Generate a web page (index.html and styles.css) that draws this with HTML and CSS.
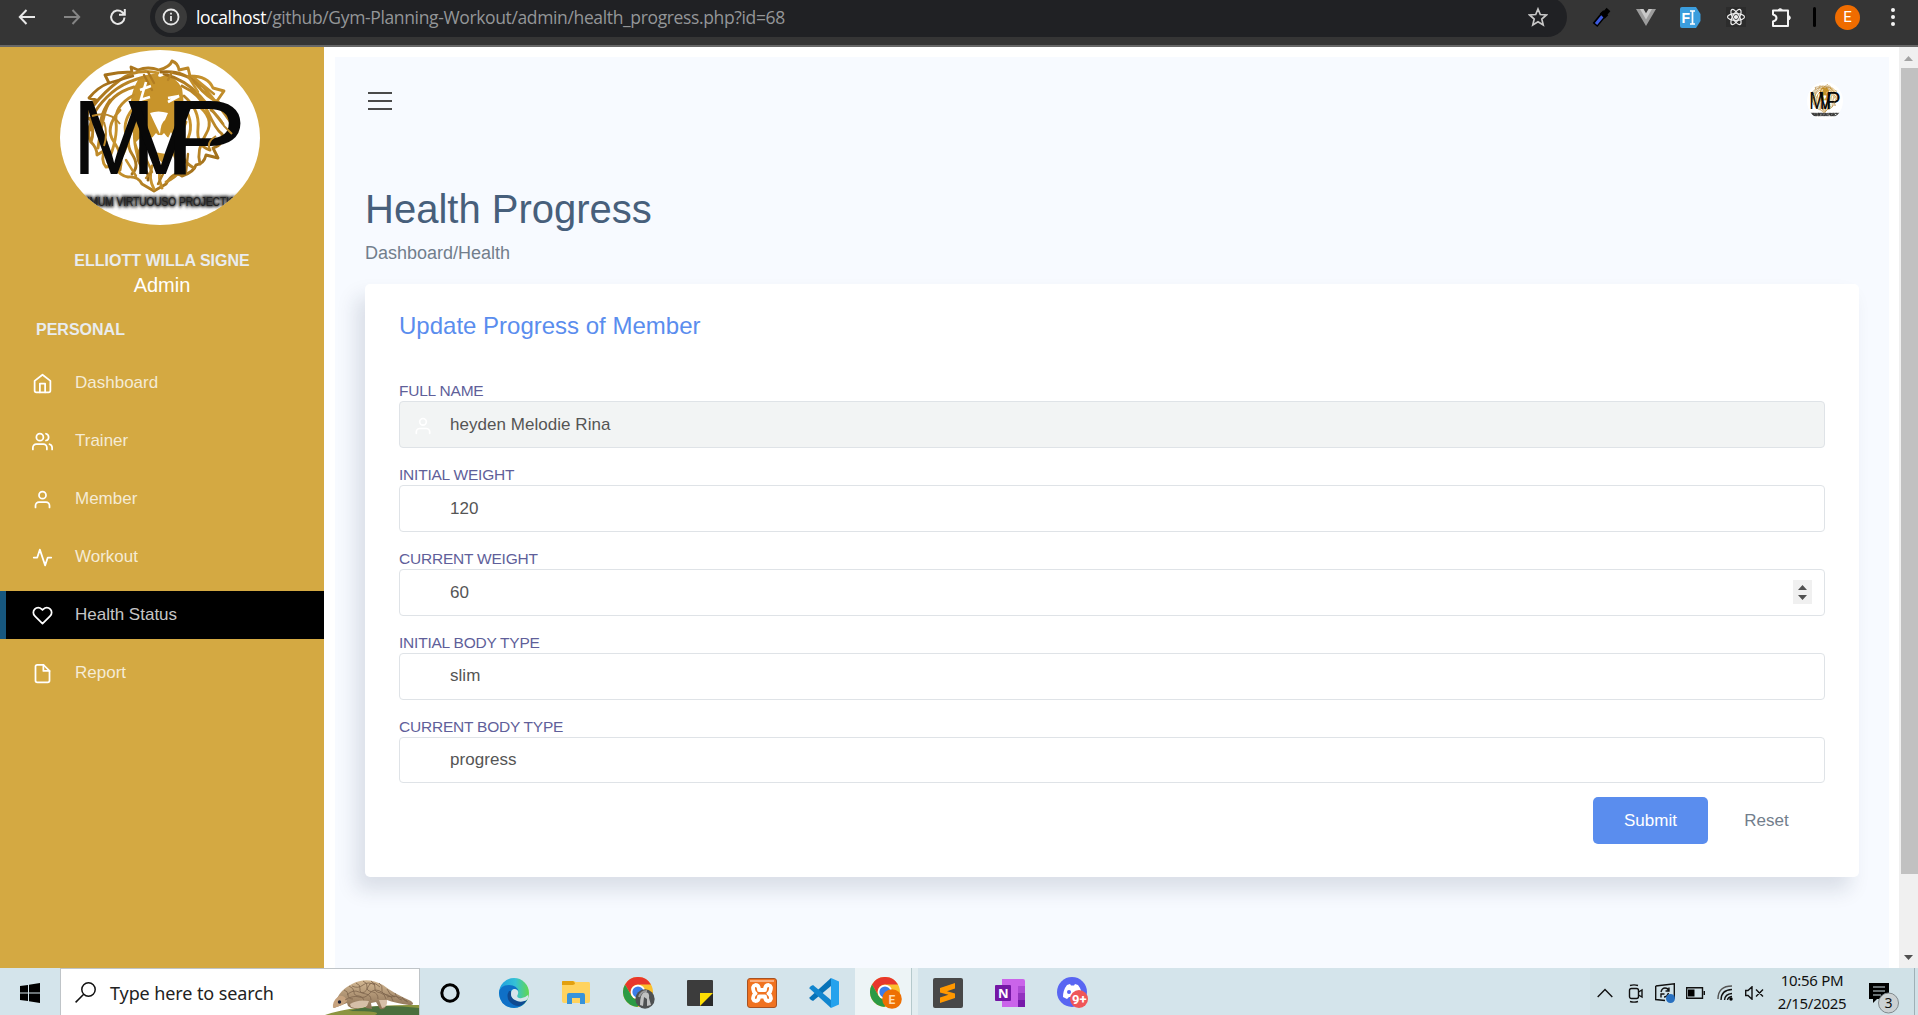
FILE: index.html
```html
<!DOCTYPE html>
<html lang="en">
<head>
<meta charset="utf-8">
<title>Health Progress</title>
<link rel="stylesheet" href="styles.css">
</head>
<body>
<svg class="defs" aria-hidden="true">
  <defs>
    <linearGradient id="gold" x1="0" y1="0" x2="1" y2="1"><stop offset="0" stop-color="#9a6514"/><stop offset=".5" stop-color="#c9952f"/><stop offset="1" stop-color="#8a5a10"/></linearGradient>
    <linearGradient id="scale" x1="0" y1="0" x2="0" y2="1"><stop offset="0" stop-color="#d3b893"/><stop offset="1" stop-color="#8b7055"/></linearGradient>
    <linearGradient id="edgeA" x1="0" y1="0" x2="1" y2="0"><stop offset="0" stop-color="#1e9de0"/><stop offset=".55" stop-color="#35c1d6"/><stop offset="1" stop-color="#62d84e"/></linearGradient>
    <filter id="soft"><feGaussianBlur stdDeviation="1.6"/></filter>
    <symbol id="logo" viewBox="0 0 200 175" preserveAspectRatio="none">
      <clipPath id="oval"><ellipse cx="100" cy="87.500" rx="100" ry="87.500"/></clipPath>
      <ellipse cx="100" cy="87.500" rx="100" ry="87.500" fill="#fff"/>
      <g clip-path="url(#oval)">
        <path d="M78 30Q92 22 100 27Q112 22 122 38Q126 60 120 84L114 88L111 82L108 88L104 83L100 87L96 83L92 88L86 82L76 92L82 112Q86 128 80 118Q70 92 74 72Q66 50 78 30ZM95 104Q101 96 107 104L102 113Z" fill="#c8942b"/>
        <g fill="none" stroke="url(#gold)" stroke-width="2.900" stroke-linejoin="round" stroke-linecap="round">
          <path d="M99 20Q88 16 78 20L71 17L72 22Q58 22 45 25L49 33Q38 37 29 48L36 50Q27 58 27 68L33 70Q25 82 31 92Q37 98 37 105L45 100Q40 110 46 117L54 116Q60 126 68 127Q78 126 82 134L94 141L106 134Q114 120 122 126Q134 122 136 115Q144 114 146 105L158 108L153 98Q164 94 162 86L172 84Q178 78 172 70Q170 60 163 56L157 51L164 41L153 38Q148 26 130 26L128 18L119 20Q118 13 112 11Q110 17 99 20Z"/>
          <path d="M98 23Q76 18 60 30T34 55M97 25Q66 28 47 47T31 80M74 37Q50 44 45 62T38 98M74 45Q54 56 56 72T48 112M76 55Q62 70 66 84T56 114M30 68Q35 82 31 92M60 60Q44 78 54 92T60 120M50 50Q36 70 43 84T43 102M74 76Q64 92 72 104T72 124M82 96Q74 108 82 116T88 130"/>
          <path d="M101 22Q124 20 136 34T158 52M104 24Q126 30 140 46T163 74M122 36Q140 44 148 62T162 84M124 46Q140 60 138 78T150 100M124 56Q136 76 126 92T134 118M126 72Q118 88 122 104T118 124M136 54Q156 68 146 84T140 114M110 22Q134 26 146 40T172 74M116 84Q110 102 118 112T106 132M104 112Q96 124 102 138M92 116Q88 128 94 139"/>
          <path d="M88 22L94 33M84 25L92 40M112 22L108 30M49 33L73 26M128 26L138 42M132 26L154 44M84 104L92 122L86 128M112 100L104 122L98 134M66 110L76 126M128 104L126 122" stroke-width="2.400"/>
        </g>
        <path d="M86 32L79 56M80 40L91 36M80 50L90 47M108 48L119 46L108 52" stroke="#fff" stroke-width="2.600" fill="none"/>
        <path d="M90 63Q98 60 108 63L105 70Q101 72 100 84Q94 72 90 63ZM90 90Q98 80 112 90L106 104L94 102Z" fill="#fff"/>
        <g class="mark">
          <text transform="translate(12 124)" textLength="84" lengthAdjust="spacingAndGlyphs">M</text>
          <text transform="translate(68 124)" textLength="66" lengthAdjust="spacingAndGlyphs">V</text>
          <text transform="translate(104 124)" textLength="83" lengthAdjust="spacingAndGlyphs">P</text>
        </g>
        <path d="M150 60Q160 66 164 76L172 84M156 86Q146 92 150 100M44 72Q48 84 44 96M32 66Q50 60 60 74" stroke="#b8862a" stroke-width="2" fill="none"/>
        <g class="tagline"><text class="glow" x="20" y="156" textLength="164" lengthAdjust="spacingAndGlyphs" filter="url(#soft)">XIMUM VIRTUOUSO PROJECTION</text><text x="20" y="156" textLength="164" lengthAdjust="spacingAndGlyphs">XIMUM VIRTUOUSO PROJECTION</text></g>
      </g>
    </symbol>
    <symbol id="user" viewBox="0 0 24 24"><path d="M20 21v-2a4 4 0 0 0-4-4H8a4 4 0 0 0-4 4v2"/><circle cx="12" cy="7" r="4"/></symbol>
    <symbol id="chrome" viewBox="0 0 30 30">
      <circle cx="15" cy="15" r="15" fill="#fbc02d"/>
      <path d="M2 7.500A15 15 0 0 1 28 7.500H15A7.500 7.500 0 0 0 8.500 18.700Z" fill="#e8372c"/>
      <path d="M2 7.500L8.500 18.800A7.500 7.500 0 0 0 18 22L14.500 30A15 15 0 0 1 2 7.500Z" fill="#2b9a45"/>
      <circle cx="15" cy="15" r="7.300" fill="#fff"/><circle cx="15" cy="15" r="5.600" fill="#3b7de9"/>
    </symbol>
  </defs>
</svg>

<header class="browser">
  <div class="tool"><svg width="18" height="18" viewBox="0 0 18 18" stroke="#e8e8e8"><path d="M17 9H2M8.500 2L1.800 9L8.500 16"/></svg></div>
  <div class="tool"><svg width="18" height="18" viewBox="0 0 18 18" stroke="#858585"><path d="M1 9H16M9.500 2L16.200 9L9.500 16"/></svg></div>
  <div class="tool"><svg width="18" height="18" viewBox="0 0 18 18" stroke="#e8e8e8"><path d="M15.500 9.500A6.700 6.700 0 1 1 13.300 4.200L15.500 6.400M15.800 1V6.800H10"/></svg></div>
  <div class="omnibox">
    <div class="info"><svg width="18" height="18" viewBox="0 0 18 18" stroke="#e8e8e8"><circle cx="9" cy="9" r="7.500"/><path d="M9 8V13M9 4.800V6.500"/></svg></div>
    <div class="url"><b>localhost</b>/github/Gym-Planning-Workout/admin/health_progress.php?id=68</div>
    <svg width="20" height="20" viewBox="0 0 20 20" stroke="#c7c7c7" stroke-width="1.700"><path d="M10 2L12.300 7.500L18.300 8L13.800 12L15.200 17.900L10 14.800L4.800 17.900L6.200 12L1.700 8L7.700 7.500Z"/></svg>
  </div>
  <div class="tool"><svg width="20" height="22" viewBox="0 0 20 22"><path d="M3 19L12 8" stroke="#000" stroke-width="6"/><path d="M4 18L11 9.500" stroke="#3d5be0" stroke-width="3"/><path d="M9.500 6L14.500 11M12.500 8L16.500 3.500" stroke="#000" stroke-width="5"/></svg></div>
  <div class="tool nudge-left"><svg width="20" height="17" viewBox="0 0 20 17"><path d="M0 0H6L10 7L14 0H20L10 17Z" fill="#9c9c9c"/><path d="M4 0H7.500L10 4.300L12.500 0H16L10 10.500Z" fill="#c9c9c9"/></svg></div>
  <div class="tool nudge-left"><svg width="21" height="21" viewBox="0 0 21 21"><path d="M2 0H16L20.500 7V14L16 21H2Q0 21 0 19V2Q0 0 2 0Z" fill="#3b9ddd"/><text x="1.500" y="16" class="fi">F</text><path d="M10 4H15M12.500 4V17M10 17H15" stroke="#fff" stroke-width="1.700"/></svg></div>
  <div class="tool nudge-left"><svg class="react" width="20" height="20" viewBox="0 0 20 20" stroke="#eee" stroke-width="1.200"><g><ellipse cx="10" cy="10" rx="8.500" ry="3.300"/><ellipse cx="10" cy="10" rx="8.500" ry="3.300" transform="rotate(60 10 10)"/><ellipse cx="10" cy="10" rx="8.500" ry="3.300" transform="rotate(120 10 10)"/></g><circle cx="10" cy="10" r="1.500" fill="#eee"/></svg></div>
  <div class="tool"><svg width="21" height="21" viewBox="0 0 21 21" stroke="#f4f4f4" stroke-width="2.200"><path d="M2 3.500H17V19H2V14.500Q5.500 13.500 5.500 11T2 7.500Z" stroke-linejoin="round"/><path d="M7 3.500A2.300 2.300 0 0 1 11.500 3.500ZM17.500 8.500A2.300 2.300 0 0 1 17.500 13Z" fill="#f4f4f4" stroke-width="1"/></svg></div>
  <div class="divider"><i></i></div>
  <div class="tool"><span class="account">E</span></div>
  <div class="tool"><svg width="6" height="18" viewBox="0 0 6 18"><g fill="#f4f4f4"><circle cx="3" cy="2" r="2"/><circle cx="3" cy="9" r="2"/><circle cx="3" cy="16" r="2"/></g></svg></div>
</header>

<div class="page">
  <aside class="sidebar">
    <svg class="brand" width="200" height="175"><use href="#logo"/></svg>
    <div class="name">ELLIOTT WILLA SIGNE</div>
    <div class="role">Admin</div>
    <div class="group">PERSONAL</div>
    <nav class="menu">
      <a><svg viewBox="0 0 24 24"><path d="M3 9l9-7 9 7v11a2 2 0 0 1-2 2H5a2 2 0 0 1-2-2z"/><path d="M9 22V12h6v10"/></svg><span>Dashboard</span></a>
      <a><svg viewBox="0 0 24 24"><path d="M17 21v-2a4 4 0 0 0-4-4H5a4 4 0 0 0-4 4v2"/><circle cx="9" cy="7" r="4"/><path d="M23 21v-2a4 4 0 0 0-3-3.870M16 3.130a4 4 0 0 1 0 7.750"/></svg><span>Trainer</span></a>
      <a><svg><use href="#user"/></svg><span>Member</span></a>
      <a><svg viewBox="0 0 24 24"><path d="M22 12h-4l-3 9L9 3l-3 9H2"/></svg><span>Workout</span></a>
      <a class="active"><svg viewBox="0 0 24 24"><path d="M20.840 4.610a5.500 5.500 0 0 0-7.780 0L12 5.670l-1.060-1.060a5.500 5.500 0 0 0-7.780 7.780l1.060 1.060L12 21.230l7.780-7.780 1.060-1.060a5.500 5.500 0 0 0 0-7.780z"/></svg><span>Health Status</span></a>
      <a><svg viewBox="0 0 24 24"><path d="M13 2H6a2 2 0 0 0-2 2v16a2 2 0 0 0 2 2h12a2 2 0 0 0 2-2V9z"/><path d="M13 2v7h7"/></svg><span>Report</span></a>
    </nav>
  </aside>
  <main class="main">
    <div class="topbar">
      <div class="burger"><i></i><i></i><i></i></div>
      <svg class="avatar" width="36" height="38"><use href="#logo"/></svg>
    </div>
    <h1>Health Progress</h1>
    <div class="crumb">Dashboard/Health</div>
    <section class="card">
      <h2>Update Progress of Member</h2>
      <div class="field"><label>FULL NAME</label><div class="input readonly"><svg width="20" height="20"><use href="#user"/></svg><span>heyden Melodie Rina</span></div></div>
      <div class="field"><label>INITIAL WEIGHT</label><div class="input"><span>120</span></div></div>
      <div class="field"><label>CURRENT WEIGHT</label><div class="input"><span>60</span><svg class="spin" width="19" height="24" viewBox="0 0 19 24"><path d="M5 10L9.500 5L14 10ZM5 15L9.500 20L14 15Z" fill="#505050"/></svg></div></div>
      <div class="field"><label>INITIAL BODY TYPE</label><div class="input raised"><span>slim</span></div></div>
      <div class="field"><label>CURRENT BODY TYPE</label><div class="input raised last"><span>progress</span></div></div>
      <div class="actions"><div class="btn submit">Submit</div><div class="btn reset">Reset</div></div>
    </section>
  </main>
  <div class="scrollbar">
    <svg width="19" height="21" viewBox="0 0 19 21"><path d="M5 14L9.500 9L14 14Z" fill="#a3a3a3"/></svg>
    <div class="thumb"></div>
    <svg width="19" height="21" viewBox="0 0 19 21"><path d="M5 8L9.500 13L14 8Z" fill="#505050"/></svg>
  </div>
</div>

<footer class="taskbar">
  <div class="start"><svg width="20" height="20" viewBox="0 0 20 20"><path d="M0 3L8 1.900V9.500H0ZM9 1.700L20 0V9.500H9ZM0 10.500H8V18.100L0 17ZM9 10.500H20V20L9 18.300Z" fill="#000"/></svg></div>
  <div class="search">
    <svg width="21" height="21" viewBox="0 0 21 21" stroke="#111" stroke-width="1.500"><circle cx="13.500" cy="7.500" r="6.700"/><path d="M8.700 12.300L.6 20.400"/></svg>
    <span>Type here to search</span>
    <svg class="pangolin" width="94" height="36" viewBox="0 0 94 36">
      <path d="M0 36Q30 25 94 26V36Z" fill="#8c9440"/><path d="M24 32Q50 24 94 29V36H50Q60 32 24 32Z" fill="#34633c" opacity=".75"/>
      <path d="M9 29Q12 12 27 5Q42-3 58 6Q68 14 86 22Q91 26 84 26Q70 24 62 21L60 25Q62 31 55 30L51 23L46 24L47 30L41 29L39 23L35 29Q27 31 23 27L22 24Z" fill="url(#scale)"/>
      <path d="M8 29Q7 22 14 17Q20 16 22 22Q18 27 8 29Z" fill="#c6a27e"/><circle cx="14.500" cy="23" r="1.700" fill="#1c1f33"/>
      <g fill="none" stroke="#7d654c" stroke-width=".8"><path d="M19 11q4 1 4 5t5 4M24 7q5 2 5 6t5 4q5 1 5 6M31 4q5 2 4 6t6 5q5 1 5 6M38 2q5 2 4 6t6 5q5 1 5 7M46 2q5 3 4 7t6 5q4 1 5 6M54 4q4 3 3 7t6 5q4 1 5 6M62 10q2 6 8 8M70 14q2 6 7 7M77 18q2 4 6 5M22 16q6-6 12-3t9-5t12 0M20 21q8-5 14-3t11-4t13 0t12 3M27 7q6 3 11-1t12 0M62 18q8-3 20 4"/></g>
      <path d="M25 25Q33 20 44 22L42 27Q34 31 26 28ZM54 21L62 21Q63 28 57 29Z" fill="#d6bfa8"/>
    </svg>
  </div>
  <div class="apps">
    <div class="app nudge-left"><svg width="20" height="20" viewBox="0 0 20 20"><circle cx="10" cy="10" r="8.200" stroke="#000" stroke-width="3"/></svg></div>
    <div class="app nudge-right"><svg width="30" height="30" viewBox="0 0 30 30"><circle cx="15" cy="15" r="15" fill="url(#edgeA)"/><path d="M0 15Q1 7 10 7Q18 7 20 14Q19 11 15 11Q11 12 11 17Q12 24 20 24Q25 24 28 22Q23 30 15 30Q1 29 0 15Z" fill="#0f70c7"/><path d="M10 13Q7 18 10 23Q14 28 20 28Q25 27 28 22Q24 24 19 23Q11 21 12 13Z" fill="#104a90"/><path d="M12 16Q12 11 16 11Q20 12 19 16Q17 19 20 20Q25 21 29 17Q30 20 27 22.500Q21 25 16 22Q12 20 12 16Z" fill="#d5e4eb"/></svg></div>
    <div class="app nudge-right"><svg width="28" height="24" viewBox="0 0 28 24"><path d="M0 0H12L14 1H27Q28 1 28 3V20Q28 22 26 22H2Q0 22 0 20Z" fill="#ffd35f"/><path d="M0 1Q0 0 1 0H11Q13 1 13 3L11 4H0Z" fill="#e2a010"/><path d="M5 23V14Q5 12 7 12H21Q23 12 23 14V23H18V17H10V23Z" fill="#3793da"/></svg></div>
    <div class="app nudge-right"><svg width="32" height="32" viewBox="0 0 32 32"><use href="#chrome" width="30" height="30"/><circle cx="22" cy="22" r="9.700" fill="#4e5152"/><path d="M17 28Q17 16 22 15Q27 15 26 21L28 28L24 29V22L21 20L20 29Z" fill="#bfc1c1"/><path d="M16 20Q18 14 24 14" stroke="#999" stroke-width="2"/></svg></div>
    <div class="app"><svg width="26" height="26" viewBox="0 0 26 26"><path d="M1 0H25Q26 0 26 1V13L13 26H1Q0 26 0 25V1Q0 0 1 0Z" fill="#3c3c3c"/><path d="M13 13H26V26H13Z" fill="#292929"/><path d="M13 13H26L13 26Z" fill="#fede05"/></svg></div>
    <div class="app"><svg width="30" height="30" viewBox="0 0 30 30"><rect x=".5" y=".5" width="29" height="29" rx="2.500" fill="#f07220" stroke="#a75222"/><path d="M3 2H27V4H3Z" fill="#f9ac7c"/><g stroke="#fff" stroke-width="3.800" stroke-linejoin="round" stroke-linecap="round"><path d="M7 14Q4.500 8 8.500 7Q12 7 12 12H18Q18 7 21.500 7Q25.500 8 23 14L21.500 15.500L23 17Q25.500 22 21.500 23Q18 23 18 18.500H12Q12 23 8.500 23Q4.500 22 7 17L8.500 15.500Z"/></g></svg></div>
    <div class="app"><svg width="30" height="30" viewBox="0 0 30 30"><path d="M1 9L3 7.500L22 23V28Z" fill="#0079c5"/><path d="M1 21L3 22.500L22 7V1.500Z" fill="#0073ba"/><path d="M0 20L22 0V8L4 23Z" fill="#0873b8"/><path d="M0 10L22 30V22L4 7Z" fill="#1286cf"/><path d="M22 0L30 3.500V26.500L22 30Z" fill="#25a2ed"/></svg></div>
    <div class="app current"><svg width="32" height="32" viewBox="0 0 32 32"><use href="#chrome" width="30" height="30"/><circle cx="22" cy="22" r="9.800" fill="#ee7003"/><text x="18.500" y="26.500" class="mini">E</text></svg></div>
    <div class="app nudge-left"><svg width="30" height="30" viewBox="0 0 30 30"><rect width="30" height="30" rx="2" fill="#484848"/><path d="M7 10L22 5V10.500L14 13.200L22 15.500V20L7 25V19.500L15.500 16.800L7 14.500Z" fill="#ff9800"/></svg></div>
    <div class="app nudge-left"><svg width="30" height="28" viewBox="0 0 30 28"><path d="M7 0H28Q30 0 30 2V28H7Z" fill="#ca64ea"/><path d="M23 7H30V14H23Z" fill="#ae4bd5"/><path d="M23 14H30V21H23Z" fill="#9332bf"/><path d="M23 21H30V28H23Z" fill="#7719aa"/><rect y="6" width="16" height="16" rx="1" fill="#7417a5"/><text x="3" y="18.500" class="onenote">N</text></svg></div>
    <div class="app"><svg width="32" height="32" viewBox="0 0 32 32"><circle cx="15" cy="15" r="15" fill="#5865f2"/><path d="M10 8L13 7L14 8.500H17L18 7L21 8Q25 13 25 20L21 22L19 20H12L10 22L6 20Q6 13 10 8Z" fill="#fff"/><circle cx="12" cy="15" r="2" fill="#5865f2"/><circle cx="22" cy="22" r="9" fill="#ef5558"/><text x="15" y="26.500" class="mini nine">9+</text></svg></div>
  </div>
  <div class="tray">
    <div class="ti"><svg width="16" height="10" viewBox="0 0 16 10"><path d="M.7 9L8 1.500L15.300 9"/></svg></div>
    <div class="ti nudge-right"><svg width="16" height="19" viewBox="0 0 16 19"><rect x="1.500" y="4.500" width="9" height="10" rx="2"/><path d="M10.500 8L14 6V13L10.500 11M2 1.500Q6 .2 10 1.500M2 17.500Q6 18.800 10 17.500"/></svg></div>
    <div class="ti"><svg width="20" height="20" viewBox="0 0 20 20"><path d="M.7 3L19.300.8V16M.7 3V16.500L10 17.500M6 9Q7 5 10 5T13.500 7.500M14 4.500V8H10.500M13.500 10Q12 14 9 14M6 14.500V11H9.500"/><circle cx="15.500" cy="15.500" r="4.500" fill="#2870c0" stroke="none"/></svg></div>
    <div class="ti"><svg width="19" height="12" viewBox="0 0 19 12"><path d="M.7.700H16.500V11.300H.7ZM18.300 4V8"/><path d="M2 2.500H8.500V9.500H2Z" fill="#000" stroke="none"/></svg></div>
    <div class="ti"><svg width="16" height="16" viewBox="0 0 16 16"><path d="M1 14Q1 1 15 1" stroke="#555"/><path d="M4 15Q4 5 15 4.500M7.500 15Q8 9 15 8.500M10.500 15Q11 12 15 11.500"/><circle cx="14" cy="14" r="1.700" fill="#000" stroke="none"/></svg></div>
    <div class="ti nudge-left"><svg width="19" height="14" viewBox="0 0 19 14"><path d="M.7 4.500H3L7 .8V13.200L3 9.500H.7ZM11 3.500L18 10.500M18 3.500L11 10.500"/></svg></div>
    <div class="clock"><span>10:56 PM</span><span>2/15/2025</span></div>
    <div class="notif"><svg width="32" height="32" viewBox="0 0 32 32"><path d="M0 0H20V16H8L4 20V16H0Z" fill="#000"/><path d="M4 4H16M4 8H16M4 12H12" stroke="#d0e0e6"/><circle cx="19.500" cy="20" r="10" fill="#ccd1d3" stroke="#81898d"/><text x="15.500" y="25" class="count">3</text></svg></div>
  </div>
</footer>
</body>
</html>
```
FILE: styles.css
```css
* { box-sizing: border-box; }
body {
  margin: 0;
  width: 1918px;
  height: 1015px;
  overflow: hidden;
  display: flex;
  flex-direction: column;
  font-family: "Liberation Sans", Arial, sans-serif;
}
svg { display: block; fill: none; flex: none; }
.defs { position: absolute; width: 0; height: 0; }

/* browser toolbar */
.browser {
  height: 47px;
  flex: none;
  display: flex;
  align-items: center;
  padding: 0 3px 11px 4px;
  background: #353535;
  border-bottom: 2px solid #676767;
}
.tool { width: 45px; display: flex; justify-content: center; }
.tool svg { stroke-width: 2; }
.tool:nth-child(3) { width: 47px; }
.omnibox {
  flex: 1;
  height: 40px;
  margin: 0 12px 0 9px;
  padding: 0 19px 0 5px;
  border-radius: 20px;
  background: #202124;
  display: flex;
  align-items: center;
}
.info { width: 32px; height: 32px; border-radius: 50%; background: #3a3a3a; display: flex; align-items: center; justify-content: center; }
.info svg { stroke-width: 1.8; }
.url {
  flex: 1;
  margin-left: 9px;
  font: 17.5px "Open Sans", "Noto Sans", sans-serif;
  letter-spacing: -0.36px;
  color: #949698;
}
.url b { font-weight: 400; color: #fff; }
.tool .react { stroke-width: 1.2; background: #2c2c2c; }
.fi { font: bold 14px "Liberation Sans", sans-serif; fill: #fff; stroke: none; }
.divider { width: 21px; display: flex; justify-content: center; }
.divider i { width: 3px; height: 20px; border-radius: 2px; background: #000; }
.account {
  width: 25px; height: 25px; border-radius: 50%;
  background: #ef6c00; color: #fff;
  font: 15px/25px Roboto, sans-serif; text-align: center;
}

/* page frame */
.page { height: 921px; flex: none; display: flex; background: #fff; }
.sidebar { width: 324px; flex: none; background: #d4a942; padding-top: 3px; }
.brand { margin-left: 60px; }
.mark text { font: 106px "Liberation Sans", sans-serif; fill: #080808; }
.tagline text { font: 13px "Liberation Sans", sans-serif; fill: #222; }
.tagline .glow { stroke: #333; stroke-width: 2.5; }
.name { margin-top: 26px; text-align: center; font-weight: bold; font-size: 16px; line-height: 20px; color: #e9ecef; }
.role { margin-top: 2px; text-align: center; font-size: 20px; line-height: 24px; color: #fff; }
.group { margin: 24px 0 0 36px; font-weight: bold; font-size: 16px; line-height: 18px; color: #e9ecef; }
.menu { margin-top: 20px; display: flex; flex-direction: column; gap: 10.1px; }
.menu a {
  height: 48px; padding-left: 32px;
  display: flex; align-items: center; gap: 22px;
  font-size: 17px; color: rgba(255, 255, 255, .78);
}
.menu svg { width: 21px; height: 21px; stroke: #fff; stroke-width: 2; stroke-linecap: round; stroke-linejoin: round; }
.menu .active { background: #000; border-left: 6px solid #17577e; padding-left: 26px; }

.main {
  flex: 1;
  margin: 10px 10px 0 11px;
  padding: 0 30px;
  background: #f7faff;
}
.topbar { display: flex; justify-content: space-between; padding: 25px 16px 0 3px; }
.burger { padding-top: 10px; display: flex; flex-direction: column; gap: 6px; }
.burger i { width: 24px; height: 2px; background: #4a4a4a; }
h1 { margin: 65px 0 0; font-weight: 400; font-size: 40px; line-height: 48px; color: #475f7b; }
.crumb { margin-top: 9px; font-size: 18px; line-height: 22px; color: #727e8c; }
.card {
  height: 593px;
  margin-top: 20px;
  padding: 28px 34px 0;
  border-radius: 5px;
  background: #fff;
  box-shadow: -9px 13px 20px 0 rgba(25, 42, 70, .13);
}
h2 { margin: 0 0 42px; font-weight: 400; font-size: 24px; line-height: 28px; color: #5a8dee; }
.field { height: 84px; }
label { display: block; height: 19px; font-size: 15.5px; letter-spacing: -0.22px; line-height: 18px; color: #5f5f9a; }
.input {
  height: 47px;
  display: flex; align-items: center;
  padding: 1px 12px 0 50px;
  border: 1px solid #dfe3e7;
  border-radius: 4px;
  font-size: 17px; letter-spacing: 0.04px; color: #555;
}
.input.readonly { background: #f2f4f4; padding-left: 13px; gap: 17px; }
.input.readonly svg { stroke: #fff; stroke-width: 2; stroke-linecap: round; position: relative; top: 1px; }
.input.raised { padding: 0 12px 1px 50px; }
.input.last { height: 46px; }
.spin { margin: 0 0 2px auto; background: #f0f0f0; }
.actions { display: flex; justify-content: flex-end; margin-top: -5px; }
.btn { height: 47px; font-size: 17px; line-height: 47px; text-align: center; border-radius: 5px; }
.submit { width: 115px; background: #5a8dee; color: #fff; }
.reset { width: 117px; color: #727e8c; }

.scrollbar { width: 19px; background: #f0f0f0; display: flex; flex-direction: column; }
.thumb { height: 806px; margin-left: 2px; background: #c1c1c1; }
.scrollbar svg:last-child { margin-top: auto; }

/* desktop taskbar */
.taskbar { height: 47px; flex: none; display: flex; background: #d4e4eb; }
.start { width: 60px; display: flex; justify-content: center; align-items: center; padding-top: 3px; }
.search {
  width: 360px; display: flex; align-items: center;
  padding-left: 14px; background: #fff; border: 1px solid #bfc4c8; border-bottom: 0;
  font: 18px "Noto Sans", sans-serif; letter-spacing: -0.1px; color: #222;
}
.search span { margin-left: 14px; padding-top: 1px; }
.pangolin { margin-left: auto; align-self: flex-end; }
.apps { display: flex; }
.app { width: 62.2px; display: flex; align-items: center; justify-content: center; padding-top: 3px; }
.nudge-left { padding-right: 2px; }
.nudge-right { padding-left: 2px; }
.current { background: linear-gradient(90deg, #edf4f6 56px, #b5c9cc 56px, #b5c9cc 57px, #e2edf0 57px); }
.mini { font: bold 12px Roboto, sans-serif; fill: #ffd9b0; }
.nine { font-size: 13px; fill: #fff; }
.onenote { font: bold 13px "Open Sans", sans-serif; fill: #fff; }
.tray { margin-left: auto; width: 328px; background: #d0e1e7; display: flex; }
.ti { width: 30px; display: flex; align-items: center; justify-content: center; padding-top: 3px; }
.ti svg { stroke: #111; stroke-width: 1.4; }
.clock {
  width: 84px; padding-top: 1px;
  display: flex; flex-direction: column; align-items: center;
  font: 15px/23px "Noto Sans", sans-serif; letter-spacing: -0.3px; color: #111;
}
.notif { width: 61px; padding: 15px 0 0 15px; border-right: 1px solid #9fb0b6; }
.count { font: 14px "Noto Sans", sans-serif; fill: #111; }
```
